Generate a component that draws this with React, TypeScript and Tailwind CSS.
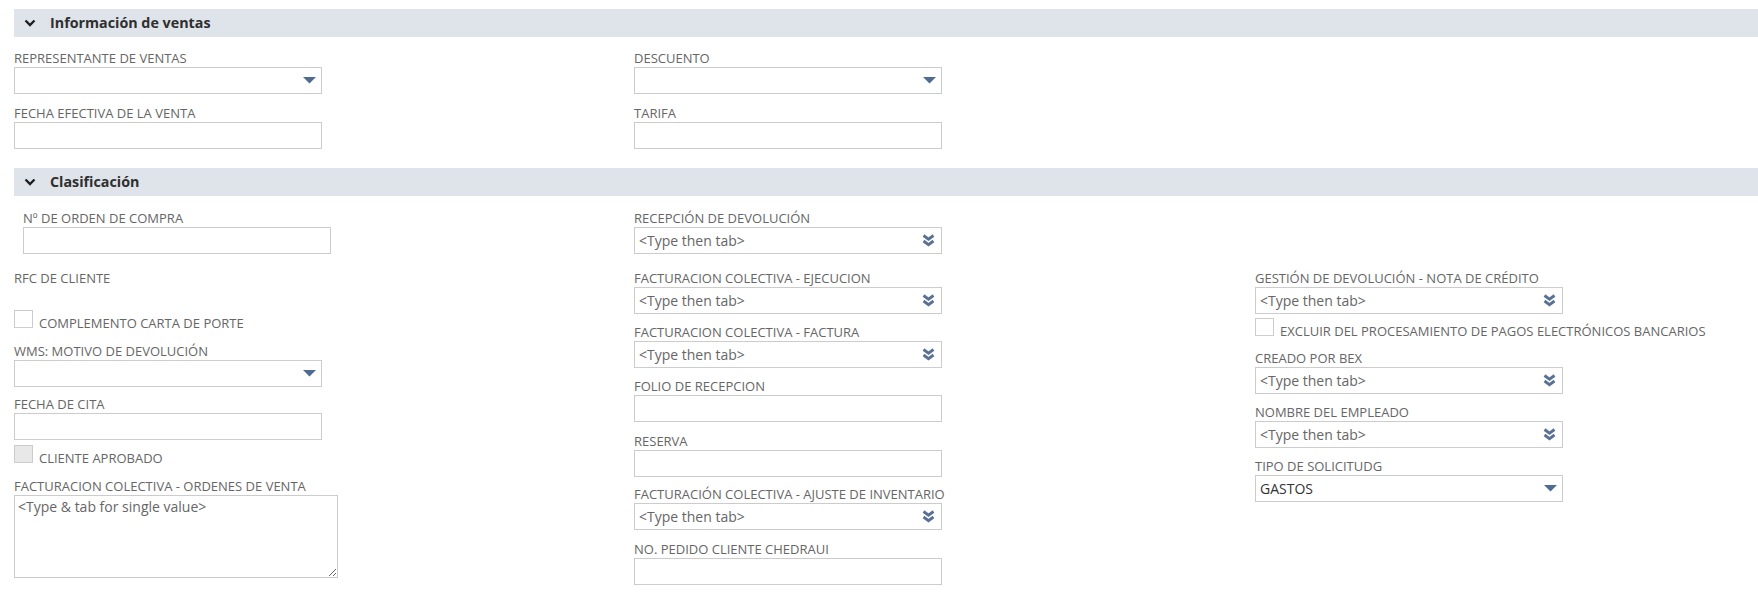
import React from 'react';

const FONT = "font-['Open_Sans',_'Liberation_Sans',_sans-serif]";

const TriangleDown = () => (
  <svg width="13" height="7" viewBox="0 0 13 7" className="shrink-0">
    <path d="M0 0 H13 L6.5 6.5 Z" fill="#4f6b93" />
  </svg>
);

const DoubleChevron = () => (
  <svg width="13" height="13" viewBox="0 0 13 13" className="shrink-0">
    <path
      d="M1.5 1.5 L6.5 5.2 L11.5 1.5 M1.5 7 L6.5 10.7 L11.5 7"
      fill="none"
      stroke="#5a7196"
      strokeWidth="2.8"
      strokeLinejoin="miter"
    />
  </svg>
);

const SectionChevron = () => (
  <svg width="12" height="8" viewBox="0 0 12 8">
    <path d="M1.5 1.5 L6 6 L10.5 1.5" fill="none" stroke="#1f1f1f" strokeWidth="2.4" />
  </svg>
);

const Label = ({ children }: { children: React.ReactNode }) => (
  <div className="text-[13px] leading-[18px] text-[#666666] uppercase whitespace-nowrap">{children}</div>
);

const TextBox = () => <div className="w-[308px] h-[27px] border border-[#cccccc] bg-white" />;

const SelectBox = ({ value }: { value?: string }) => (
  <div className="w-[308px] h-[27px] border border-[#cccccc] bg-white flex items-center justify-between pl-[4px] pr-[5px]">
    <span className="text-[14px] text-[#333333]">{value}</span>
    <TriangleDown />
  </div>
);

const TypeBox = () => (
  <div className="w-[308px] h-[27px] border border-[#cccccc] bg-white flex items-center justify-between pl-[4px] pr-[6px]">
    <span className="text-[14px] text-[#666666]">&lt;Type then tab&gt;</span>
    <DoubleChevron />
  </div>
);

const Check = ({ label, disabled }: { label: string; disabled?: boolean }) => (
  <div className="flex items-start">
    <div
      className={
        disabled
          ? 'w-[19px] h-[18px] border border-[#cccccc] bg-[#e8e8e8]'
          : 'w-[19px] h-[18px] border border-[#cccccc] bg-white'
      }
    />
    <div className="pt-[4px] pl-[6px]">
      <Label>{label}</Label>
    </div>
  </div>
);

const SectionHeader = ({ title }: { title: string }) => (
  <div className="h-[28px] bg-[#dfe4eb] flex items-center pl-[10px] gap-[14px]">
    <SectionChevron />
    <span className="text-[14.3px] font-bold text-[#2f2f2f]">{title}</span>
  </div>
);

export default function App() {
  return (
    <div className={`${FONT} bg-white w-full min-h-[593px] pl-[14px] pt-[9px]`}>
      <SectionHeader title="Información de ventas" />
      <div className="grid grid-cols-[620px_621px_1fr] pt-[12px]">
        <div className="flex flex-col">
          <Label>Representante de ventas</Label>
          <SelectBox />
          <div className="mt-[10px]">
            <Label>Fecha efectiva de la venta</Label>
            <TextBox />
          </div>
        </div>
        <div className="flex flex-col">
          <Label>Descuento</Label>
          <SelectBox />
          <div className="mt-[10px]">
            <Label>Tarifa</Label>
            <TextBox />
          </div>
        </div>
        <div />
      </div>

      <div className="mt-[19px]">
        <SectionHeader title="Clasificación" />
      </div>
      <div className="grid grid-cols-[620px_621px_1fr]">
        {/* column 1 */}
        <div className="flex flex-col">
          <div className="mt-[13px] pl-[9px]">
            <Label>Nº de orden de compra</Label>
            <TextBox />
          </div>
          <div className="mt-[15px] h-[41px]">
            <Label>RFC de cliente</Label>
          </div>
          <Check label="Complemento carta de porte" />
          <div className="mt-[10px]">
            <Label>WMS: Motivo de devolución</Label>
            <SelectBox />
          </div>
          <div className="mt-[8px]">
            <Label>Fecha de cita</Label>
            <TextBox />
          </div>
          <div className="mt-[5px]">
            <Check label="Cliente aprobado" disabled />
          </div>
          <div className="mt-[10px]">
            <Label>Facturacion colectiva - ordenes de venta</Label>
            <textarea
              className="block w-[324px] h-[83px] border border-[#cccccc] bg-white text-[14px] px-[3px] py-[1px] leading-[20px] text-[#333] placeholder:text-[#666666] outline-none"
              placeholder="<Type & tab for single value>"
            />
          </div>
        </div>

        {/* column 2 */}
        <div className="flex flex-col">
          <div className="mt-[13px]">
            <Label>Recepción de devolución</Label>
            <TypeBox />
          </div>
          <div className="mt-[15px]">
            <Label>Facturacion colectiva - ejecucion</Label>
            <TypeBox />
          </div>
          <div className="mt-[9px]">
            <Label>Facturacion colectiva - factura</Label>
            <TypeBox />
          </div>
          <div className="mt-[9px]">
            <Label>Folio de recepcion</Label>
            <TextBox />
          </div>
          <div className="mt-[10px]">
            <Label>Reserva</Label>
            <TextBox />
          </div>
          <div className="mt-[8px]">
            <Label>Facturación colectiva - ajuste de inventario</Label>
            <TypeBox />
          </div>
          <div className="mt-[10px]">
            <Label>No. pedido cliente chedraui</Label>
            <TextBox />
          </div>
        </div>

        {/* column 3 */}
        <div className="flex flex-col">
          <div className="mt-[73px]">
            <Label>Gestión de devolución - nota de crédito</Label>
            <TypeBox />
          </div>
          <div className="mt-[4px]">
            <Check label="Excluir del procesamiento de pagos electrónicos bancarios" />
          </div>
          <div className="mt-[9px]">
            <Label>Creado por BEX</Label>
            <TypeBox />
          </div>
          <div className="mt-[9px]">
            <Label>Nombre del empleado</Label>
            <TypeBox />
          </div>
          <div className="mt-[9px]">
            <Label>Tipo de solicitudG</Label>
            <SelectBox value="GASTOS" />
          </div>
        </div>
      </div>
    </div>
  );
}
